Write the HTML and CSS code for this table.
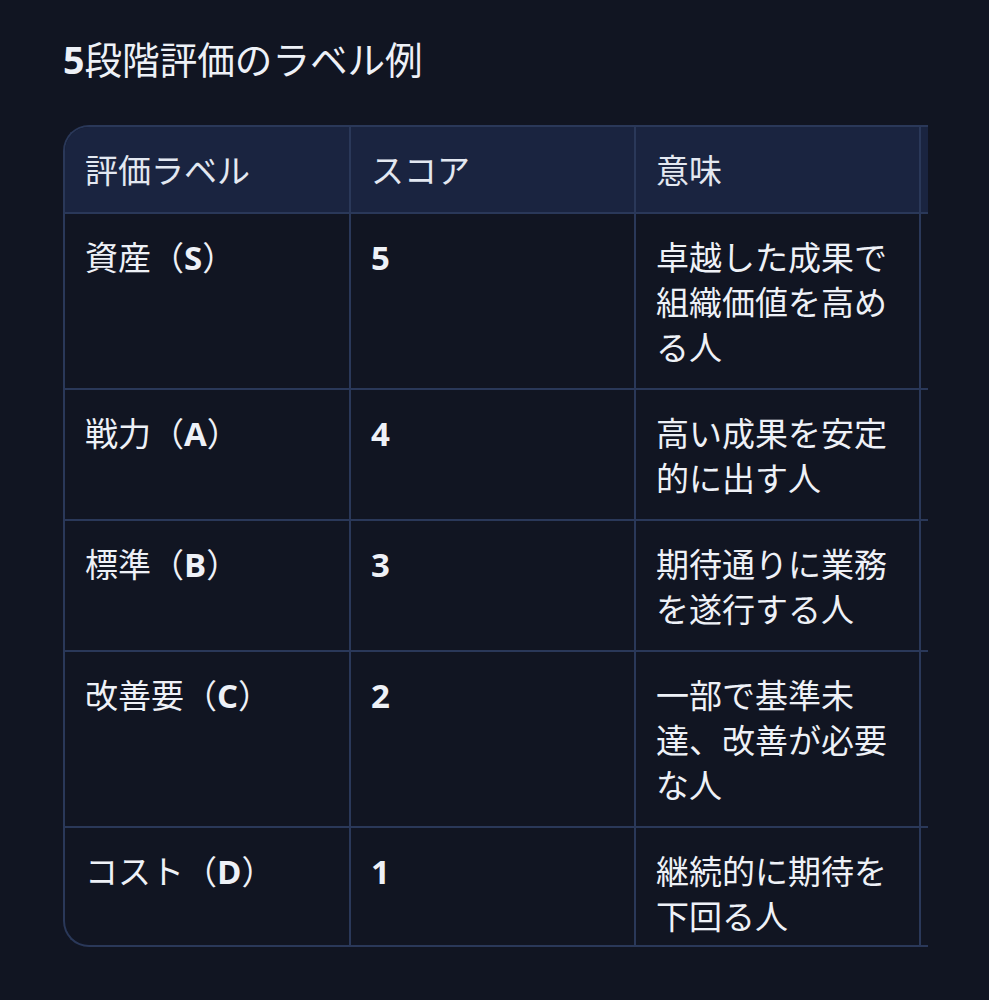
FILE: index.html
```html
<!DOCTYPE html>
<html lang="ja">
<head>
<meta charset="utf-8">
<link rel="stylesheet" href="styles.css">
</head>
<body>
<main class="page">
  <h2 class="title"><b class="latin">5</b>段階評価のラベル例</h2>
  <div class="table-wrap">
    <table class="grade-table">
      <thead>
        <tr>
          <th>評価ラベル</th>
          <th>スコア</th>
          <th>意味</th>
          <th></th>
        </tr>
      </thead>
      <tbody>
        <tr>
          <td>資産（<b class="latin">S</b>）</td>
          <td><b class="latin">5</b></td>
          <td>卓越した成果で組織価値を高める人</td>
          <td></td>
        </tr>
        <tr>
          <td>戦力（<b class="latin">A</b>）</td>
          <td><b class="latin">4</b></td>
          <td>高い成果を安定的に出す人</td>
          <td></td>
        </tr>
        <tr>
          <td>標準（<b class="latin">B</b>）</td>
          <td><b class="latin">3</b></td>
          <td>期待通りに業務を遂行する人</td>
          <td></td>
        </tr>
        <tr>
          <td>改善要（<b class="latin">C</b>）</td>
          <td><b class="latin">2</b></td>
          <td>一部で基準未達、改善が必要な人</td>
          <td></td>
        </tr>
        <tr>
          <td>コスト（<b class="latin">D</b>）</td>
          <td><b class="latin">1</b></td>
          <td>継続的に期待を下回る人</td>
          <td></td>
        </tr>
      </tbody>
    </table>
  </div>
</main>
</body>
</html>
```
FILE: styles.css
```css
html, body {
  margin: 0;
  padding: 0;
  background: #111522;
}
body {
  font-family: "Noto Sans CJK JP", "Noto Sans", sans-serif;
  color: #eef1f7;
}
.page {
  padding: 33px 0 40px 63px;
}
.title {
  margin: 0 0 40px 0;
  font-size: 37.6px;
  line-height: 50px;
  font-weight: 400;
  color: #eef1f7;
}
.latin {
  font-family: "Open Sans", "Noto Sans", sans-serif;
  font-weight: 700;
}
.table-wrap {
  width: 865px;
  height: 822px;
  overflow: hidden;
  box-sizing: border-box;
  border: 2px solid #2a3859;
  border-right: none;
  border-radius: 26px 0 0 26px;
}
.grade-table {
  border-collapse: separate;
  border-spacing: 0;
  table-layout: fixed;
  width: 1140px;
  font-size: 33px;
  line-height: 45px;
}
.grade-table th,
.grade-table td {
  box-sizing: border-box;
  width: 285px;
  padding: 20px 20px 19px;
  text-align: left;
  vertical-align: top;
  border-right: 2px solid #2a3859;
  border-bottom: 2px solid #2a3859;
}
.grade-table th:first-child,
.grade-table td:first-child {
  width: 286px;
}
.grade-table thead th {
  background: #1a2440;
  font-weight: 400;
  color: #e3e8f1;
  padding-bottom: 20px;
}
.grade-table tbody tr:last-child td {
  border-bottom: none;
}
```
